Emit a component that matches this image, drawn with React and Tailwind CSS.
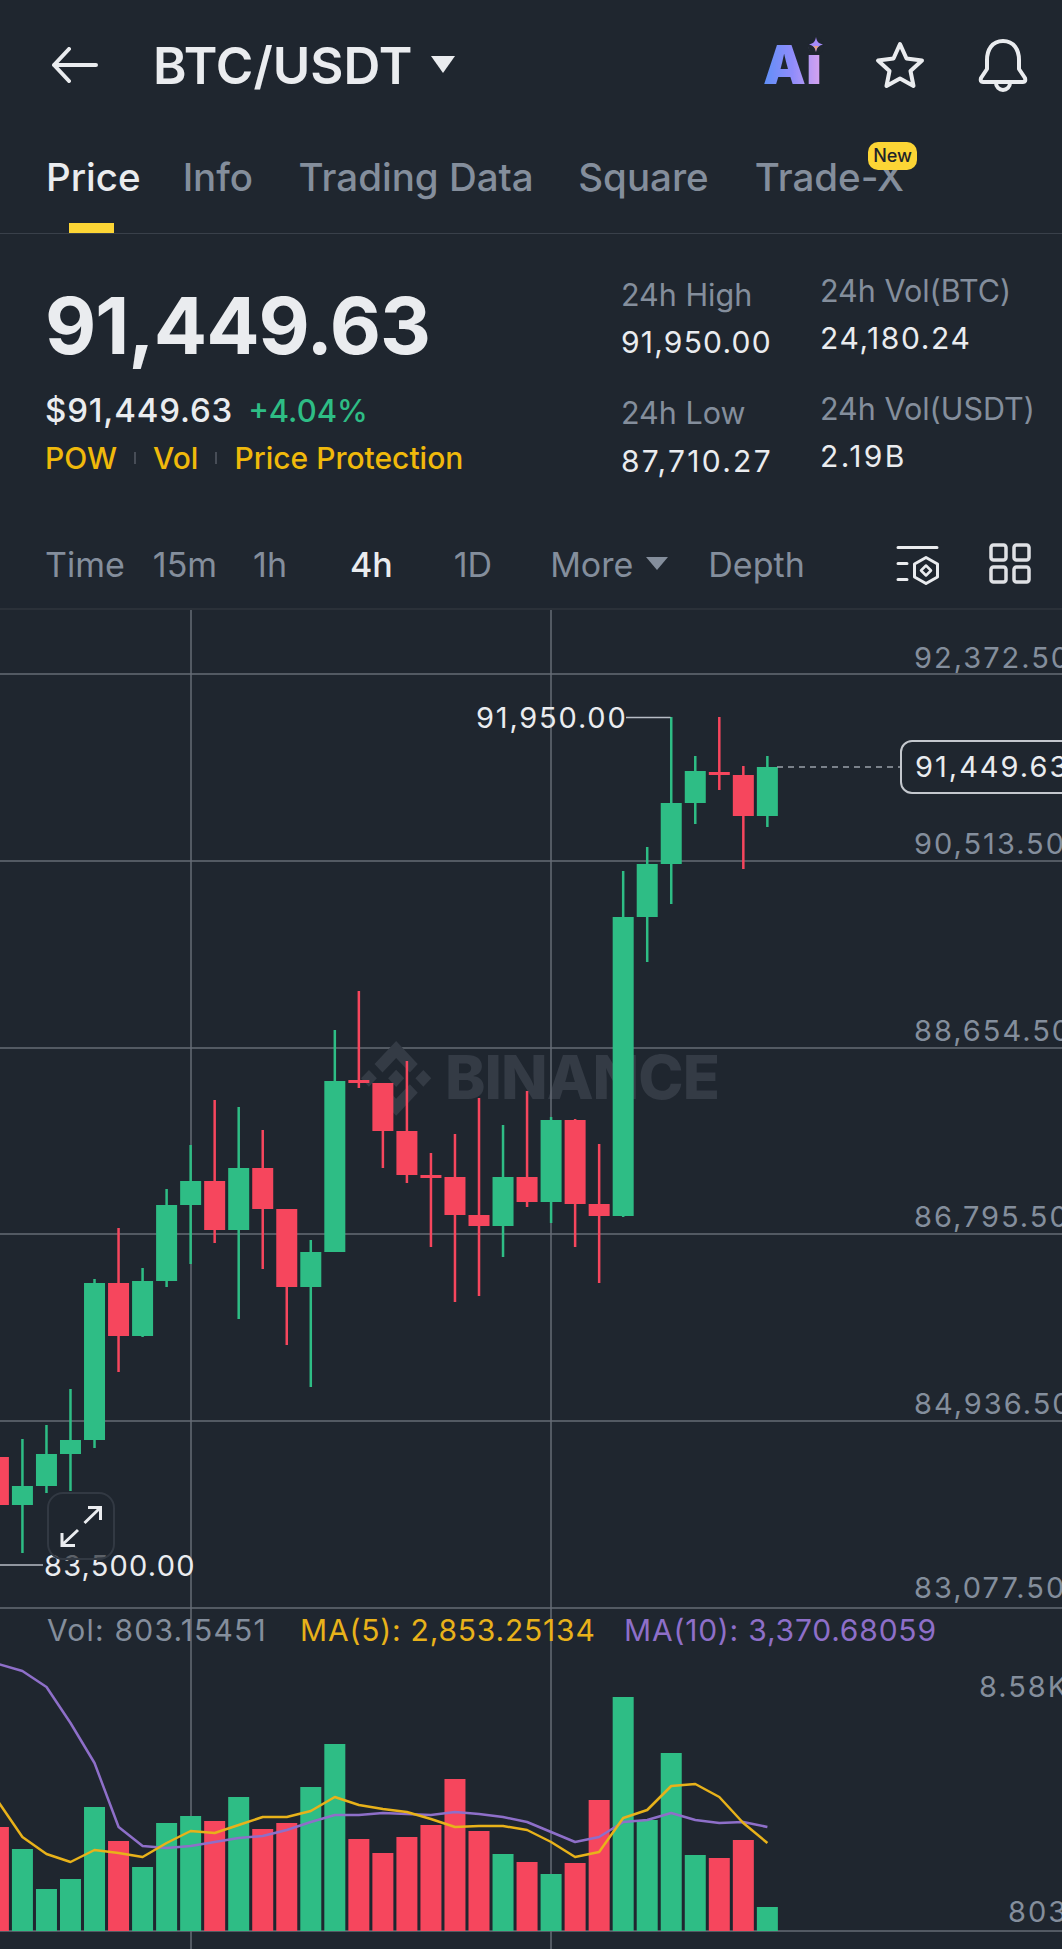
const GREEN = '#2ebd85';
const RED = '#f6465d';

// [colour, wickTop, bodyTop, bodyBottom, wickBottom], first one is cut by the left edge
const candles = [
  ['r', 1457, 1457, 1505, 1505],
  ['g', 1439, 1486, 1505, 1553],
  ['g', 1425, 1454, 1486, 1493],
  ['g', 1389, 1440, 1454, 1491],
  ['g', 1279, 1283, 1440, 1448],
  ['r', 1228, 1283, 1336, 1372],
  ['g', 1268, 1281, 1336, 1337],
  ['g', 1189, 1205, 1281, 1287],
  ['g', 1145, 1181, 1205, 1264],
  ['r', 1100, 1181, 1230, 1243],
  ['g', 1107, 1168, 1230, 1319],
  ['r', 1130, 1168, 1209, 1269],
  ['r', 1209, 1209, 1287, 1345],
  ['g', 1240, 1252, 1287, 1387],
  ['g', 1030, 1081, 1252, 1252],
  ['r', 991, 1080, 1083, 1088],
  ['r', 1083, 1083, 1131, 1168],
  ['r', 1061, 1131, 1175, 1183],
  ['r', 1153, 1175, 1178, 1247],
  ['r', 1134, 1177, 1215, 1302],
  ['r', 1098, 1215, 1226, 1296],
  ['g', 1125, 1177, 1226, 1257],
  ['r', 1091, 1177, 1202, 1207],
  ['g', 1117, 1120, 1202, 1223],
  ['r', 1119, 1120, 1204, 1247],
  ['r', 1144, 1204, 1216, 1283],
  ['g', 871, 917, 1216, 1217],
  ['g', 847, 864, 917, 962],
  ['g', 717, 803, 864, 904],
  ['g', 756, 771, 803, 824],
  ['r', 717, 772, 775, 790],
  ['r', 766, 775, 816, 869],
  ['g', 756, 767, 816, 827],
];

const volumes = [
  ['r', 1827], ['g', 1849], ['g', 1889], ['g', 1879], ['g', 1807], ['r', 1841], ['g', 1867], ['g', 1823],
  ['g', 1816], ['r', 1821], ['g', 1797], ['r', 1829], ['r', 1823], ['g', 1787], ['g', 1744], ['r', 1839],
  ['r', 1853], ['r', 1837], ['r', 1825], ['r', 1779], ['r', 1831], ['g', 1854], ['r', 1862], ['g', 1874],
  ['r', 1863], ['r', 1800], ['g', 1697], ['g', 1820], ['g', 1753], ['g', 1855], ['r', 1858], ['r', 1840],
  ['g', 1907],
];

const ma5 = [1802, 1837, 1854, 1862, 1850, 1853, 1857, 1843, 1831, 1833, 1825, 1817, 1817, 1811, 1797, 1805, 1809, 1812, 1819, 1827, 1826, 1826, 1830, 1842, 1857, 1852, 1818, 1810, 1786, 1784, 1797, 1823, 1843];
const ma10 = [1664, 1671, 1687, 1723, 1763, 1827, 1846, 1848, 1846, 1842, 1838, 1836, 1830, 1822, 1815, 1815, 1813, 1814, 1815, 1812, 1814, 1817, 1822, 1832, 1842, 1837, 1822, 1820, 1813, 1820, 1823, 1822, 1827];

const centerX = (i) => -1.6 + 24.03 * i;
const colorOf = (c) => (c === 'g' ? GREEN : RED);
const linePoints = (ys) => ys.map((y, i) => `${centerX(i).toFixed(1)},${y}`).join(' ');

const gridRows = [674, 861, 1048, 1234, 1421, 1608, 1931];
const gridCols = [191, 551];

function ChartDrawing() {
  return (
    <svg className="absolute inset-0" width="1062" height="1339" viewBox="0 610 1062 1339">
      {gridRows.map((y) => (
        <line key={y} x1="0" x2="1062" y1={y} y2={y} stroke="#666c76" strokeWidth="1.5" />
      ))}
      {gridCols.map((x) => (
        <line key={x} x1={x} x2={x} y1="610" y2="1949" stroke="#666c76" strokeWidth="1.5" />
      ))}

      <g transform="translate(361 1041) scale(0.555 0.59)" fill="#343b45">
        <path d="M38.73 53.2l24.59-24.58 24.6 24.6 14.3-14.31L63.32 0 24.43 38.88z" />
        <path d="M0 63.31l14.3-14.31 14.31 14.31-14.31 14.3z" />
        <path d="M38.73 73.41L63.32 98l24.6-24.6 14.31 14.29-38.9 38.91-38.91-38.88z" />
        <path d="M98 63.31l14.3-14.31 14.31 14.31-14.31 14.3z" />
        <path d="M77.83 63.3L63.32 48.78 52.59 59.51l-1.24 1.23-2.54 2.54 14.51 14.5 14.51-14.47z" />
      </g>

      {candles.map(([c, wickTop, top, bottom, wickBottom], i) => (
        <g key={i} fill={colorOf(c)}>
          <rect x={centerX(i) - 1.25} y={wickTop} width="2.5" height={wickBottom - wickTop} />
          <rect x={centerX(i) - 10.5} y={top} width="21" height={bottom - top} />
        </g>
      ))}

      <path d="M626 717.5H670.5" stroke="#b7bdc6" strokeWidth="1.5" fill="none" />
      <path d="M0 1565H43" stroke="#b7bdc6" strokeWidth="1.5" fill="none" />
      <path d="M777 767H900" stroke="#9aa1ab" strokeWidth="1.5" strokeDasharray="6 5" fill="none" />

      {volumes.map(([c, top], i) => (
        <rect key={i} x={centerX(i) - 10.5} y={top} width="21" height={1931 - top} fill={colorOf(c)} />
      ))}
      <polyline points={linePoints(ma10)} fill="none" stroke="#8e6fc9" strokeWidth="2.5" strokeLinejoin="round" />
      <polyline points={linePoints(ma5)} fill="none" stroke="#e8b21a" strokeWidth="2.5" strokeLinejoin="round" />
    </svg>
  );
}

function ExpandButton() {
  return (
    <div className="absolute left-[47px] top-[882px] h-[68px] w-[68px] rounded-[16px] border-2 border-[#323943] bg-[#1f262f]/70">
      <svg width="68" height="68" viewBox="47 1492 68 68" className="absolute -left-[2px] -top-[2px]" fill="none" stroke="#eaecef" strokeWidth="3">
        <path d="M62 1545L78 1530M84.5 1523L100 1508M88 1507.5H100.5V1520M62 1533V1545.5H75" />
      </svg>
    </div>
  );
}

function AxisLabel({ className, children }) {
  return <span className={`absolute text-[29px] leading-[36px] whitespace-nowrap ${className}`}>{children}</span>;
}

function Chart() {
  return (
    <div className="relative h-[1339px] overflow-hidden">
      <div className="absolute left-[445px] top-[431px] text-[61px] leading-[72px] font-extrabold tracking-[-1px] text-[#343b45]">BINANCE</div>
      <ChartDrawing />

      <AxisLabel className="left-[914px] top-[30px] tracking-[2px] text-[#848e9c]">92,372.50</AxisLabel>
      <AxisLabel className="left-[914px] top-[216px] tracking-[2px] text-[#848e9c]">90,513.50</AxisLabel>
      <AxisLabel className="left-[914px] top-[403px] tracking-[2px] text-[#848e9c]">88,654.50</AxisLabel>
      <AxisLabel className="left-[914px] top-[589px] tracking-[2px] text-[#848e9c]">86,795.50</AxisLabel>
      <AxisLabel className="left-[914px] top-[776px] tracking-[2px] text-[#848e9c]">84,936.50</AxisLabel>
      <AxisLabel className="left-[914px] top-[960px] tracking-[2px] text-[#848e9c]">83,077.50</AxisLabel>
      <AxisLabel className="left-[979px] top-[1059px] tracking-[2px] text-[#848e9c]">8.58K</AxisLabel>
      <AxisLabel className="left-[1008px] top-[1284px] tracking-[2px] text-[#848e9c]">803</AxisLabel>

      <AxisLabel className="left-[476px] top-[90px] tracking-[1.8px] text-[#eaecef]">91,950.00</AxisLabel>
      <AxisLabel className="left-[44px] top-[938px] tracking-[1.2px] text-[#eaecef]">83,500.00</AxisLabel>

      <div className="absolute left-[900px] top-[130px] h-[54px] w-[190px] rounded-[12px] border-2 border-[#c4c8ce] bg-[#1f262f]" />
      <AxisLabel className="left-[915px] top-[139px] tracking-[2px] text-[#eaecef]">91,449.63</AxisLabel>

      <ExpandButton />

      <div className="absolute left-[47px] top-[1002px] flex text-[30px] leading-[36px] whitespace-nowrap">
        <span className="w-[253px] tracking-[1.2px] text-[#848e9c]">Vol: 803.15451</span>
        <span className="w-[324px] tracking-[0.8px] text-[#e8b21a]">MA(5): 2,853.25134</span>
        <span className="tracking-[0.8px] text-[#8e6fc9]">MA(10): 3,370.68059</span>
      </div>
    </div>
  );
}

function AiMark() {
  return (
    <div className="relative ml-auto mr-[53px] bg-gradient-to-r from-[#5c8ff7] via-[#8f8cfb] to-[#d9a3ee] bg-clip-text text-[54px] leading-none font-black text-transparent">
      Ai
      <svg className="absolute -top-[3px] -right-[3px]" width="18" height="20" viewBox="0 0 18 20">
        <circle cx="9" cy="11" r="8" fill="#1f262f" />
        <path d="M9 2C10 7 11.5 8.5 16 9.5C11.5 10.5 10 12.5 9 17C8 12.5 6.5 10.5 2 9.5C6.5 8.5 8 7 9 2Z" fill="#a78bfa" />
        <path d="M5.5 11C7.5 11.5 8.4 13 9 17C9.6 13 10.5 11.5 12.5 11Z" fill="#e8a27f" />
      </svg>
    </div>
  );
}

function Header() {
  return (
    <div className="flex h-[130px] items-center pl-[52px]">
      <svg width="46" height="36" viewBox="0 0 46 36" fill="none" stroke="#eaecef" strokeWidth="4" strokeLinecap="round" strokeLinejoin="round">
        <path d="M2 18H44M17 2L2 18L17 34" />
      </svg>
      <div className="ml-[55px] text-[51px] leading-none font-semibold text-[#eaecef]">BTC/USDT</div>
      <div className="mt-[-2px] ml-[19px] h-0 w-0 border-x-[12px] border-t-[17px] border-x-transparent border-t-[#eaecef]" />
      <AiMark />
      <svg className="mr-[53px]" width="50" height="48" viewBox="0 0 50 48" fill="none" stroke="#eaecef" strokeWidth="4" strokeLinejoin="round">
        <path d="M25 3L31.5 17.5L47 19.5L35.5 30L38.5 45L25 37.5L11.5 45L14.5 30L3 19.5L18.5 17.5Z" />
      </svg>
      <svg className="mr-[34px]" width="50" height="53" viewBox="0 0 50 53" fill="none" stroke="#eaecef" strokeWidth="4" strokeLinejoin="round">
        <path d="M25 2C14 2 9 11 9 21V30L3 39Q2 43 5 43H45Q48 43 47 39L41 30V21C41 11 36 2 25 2Z" />
        <path d="M18 44A7 7 0 0 0 32 44" />
      </svg>
    </div>
  );
}

function Tabs() {
  return (
    <div className="relative flex h-[104px] border-b-[1.5px] border-[#39404a] pl-[46px] pt-[24px] text-[38.5px] leading-[46px] font-medium text-[#848e9c]">
      <span className="relative text-[#eaecef]">
        Price
        <span className="absolute left-[23px] top-[69px] h-[10px] w-[45px] bg-[#fcd535]" />
      </span>
      <span className="ml-[42px]">Info</span>
      <span className="ml-[45.5px]">Trading Data</span>
      <span className="ml-[44.5px]">Square</span>
      <span className="relative ml-[46px]">
        Trade-X
        <span className="absolute -right-[13px] -top-[12px] rounded-[10px] bg-[#fcd535] px-[5px] text-[18px] leading-[28px] font-medium text-[#1e2329]">New</span>
      </span>
    </div>
  );
}

function Stat({ label, value, valueClass }) {
  return (
    <div>
      <div className="text-[30.5px] leading-[36px] text-[#848e9c] whitespace-nowrap">{label}</div>
      <div className={`text-[30px] leading-[36px] text-[#eaecef] ${valueClass}`}>{value}</div>
    </div>
  );
}

function Summary() {
  return (
    <div className="flex h-[217px]">
      <div className="w-[621px] pl-[45px]">
        <div className="mt-[46px] text-[79px] leading-[90px] font-bold tracking-[-1px] text-[#eaecef]">91,449.63</div>
        <div className="mt-[21px] flex items-baseline leading-[38px] font-medium">
          <span className="text-[33px] tracking-[0.85px] text-[#eaecef]">$91,449.63</span>
          <span className="ml-[15px] text-[31px] text-[#2ebd85]">+4.04%</span>
        </div>
        <div className="mt-[9px] flex items-center text-[30px] leading-[38px] font-medium text-[#f0b90b]">
          <span>POW</span>
          <span className="mx-[17px] h-[12px] w-[2px] bg-[#474d57]" />
          <span>Vol</span>
          <span className="mx-[17px] h-[12px] w-[2px] bg-[#474d57]" />
          <span>Price Protection</span>
        </div>
      </div>
      <div className="w-[199px] pt-[43px]">
        <Stat label="24h High" value="91,950.00" valueClass="mt-[11px] tracking-[1.2px]" />
        <div className="mt-[35px]">
          <Stat label="24h Low" value="87,710.27" valueClass="mt-[12px] tracking-[2.3px]" />
        </div>
      </div>
      <div className="pt-[39px]">
        <Stat label="24h Vol(BTC)" value="24,180.24" valueClass="mt-[11px] tracking-[1.6px]" />
        <div className="mt-[35px]">
          <Stat label="24h Vol(USDT)" value="2.19B" valueClass="mt-[11px] tracking-[2.4px]" />
        </div>
      </div>
    </div>
  );
}

function Intervals() {
  return (
    <div className="flex h-[159px] items-start border-b-[2px] border-[#2b3139] pl-[45px] pt-[94px] text-[34px] leading-[40px] text-[#848e9c]">
      <span>Time</span>
      <span className="ml-[28px]">15m</span>
      <span className="ml-[36px]">1h</span>
      <span className="ml-[63px] font-medium text-[#eaecef]">4h</span>
      <span className="ml-[61px]">1D</span>
      <span className="ml-[58px]">More</span>
      <span className="ml-[13px] mt-[12px] h-0 w-0 border-x-[11px] border-t-[13px] border-x-transparent border-t-[#848e9c]" />
      <span className="ml-[40px]">Depth</span>
      <svg className="ml-[91px]" width="43" height="40" viewBox="0 0 43 40" fill="none" stroke="#eaecef" strokeWidth="3" strokeLinejoin="round" strokeLinecap="round">
        <path d="M2 2.5H41M2 18.5H11M2 34.5H11" />
        <path d="M30 12.5L41.5 19V32L30 38.5L18.5 32V19Z" />
        <path d="M30 20.5L35 25.5L30 30.5L25 25.5Z" strokeWidth="2.5" />
      </svg>
      <svg className="ml-[50px] -mt-[2px]" width="42" height="41" viewBox="0 0 42 41" fill="none" stroke="#dfe1e5" strokeWidth="3.5">
        <rect x="2" y="2" width="15" height="15" rx="2.5" />
        <rect x="25" y="2" width="15" height="15" rx="2.5" />
        <rect x="2" y="24" width="15" height="15" rx="2.5" />
        <rect x="25" y="24" width="15" height="15" rx="2.5" />
      </svg>
    </div>
  );
}

export default function App() {
  return (
    <div className="h-[1949px] w-[1062px] overflow-hidden bg-[#1f262f] font-['Inter',sans-serif]">
      <Header />
      <Tabs />
      <Summary />
      <Intervals />
      <Chart />
    </div>
  );
}
